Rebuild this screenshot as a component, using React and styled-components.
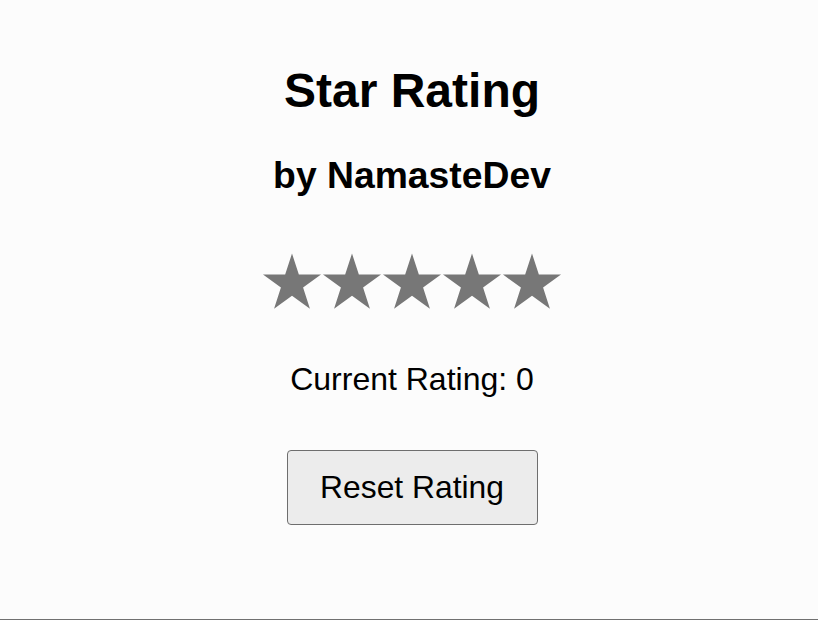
import React, { useState } from "react";
import styled, { createGlobalStyle } from "styled-components";

const GlobalStyle = createGlobalStyle`
  html, body {
    margin: 0;
    padding: 0;
    background: #fcfcfc;
  }
  body {
    font-family: "Liberation Sans", Arial, Helvetica, sans-serif;
    color: #000;
  }
`;

const Page = styled.div`
  box-sizing: border-box;
  min-height: 620px;
  padding: 67px 0 0 6px;
  display: flex;
  flex-direction: column;
  align-items: center;
  border-bottom: 1px solid #707070;
`;

const Title = styled.h1`
  margin: 0;
  font-size: 48px;
  line-height: 1;
  font-weight: 700;
`;

const Subtitle = styled.h2`
  margin: 42px 0 0;
  font-size: 37.3px;
  line-height: 1;
  font-weight: 700;
`;

const Stars = styled.div`
  margin-top: 59px;
  display: flex;
`;

const StarButton = styled.span`
  display: block;
  width: 60px;
  height: 60px;
  cursor: pointer;
  svg {
    display: block;
  }
`;

const Current = styled.p`
  margin: 50px 0 0;
  font-size: 32px;
  line-height: 1;
`;

const Reset = styled.button`
  margin-top: 55px;
  box-sizing: border-box;
  width: 251px;
  height: 75px;
  padding: 0;
  font-family: "Liberation Sans", Arial, Helvetica, sans-serif;
  font-size: 31.8px;
  color: #000;
  background: #ececec;
  border: 1px solid #6e6e6e;
  border-radius: 4px;
  cursor: pointer;
`;

const STAR_POINTS =
  "30,0.5 36.85,21.57 59.01,21.58 41.08,34.6 47.93,55.67 30,42.65 12.07,55.67 18.92,34.6 0.99,21.58 23.15,21.57";

function Star({ filled, onClick }) {
  return (
    <StarButton onClick={onClick}>
      <svg width="60" height="60" viewBox="0 0 60 60">
        <polygon points={STAR_POINTS} fill={filled ? "#f5b301" : "#777777"} />
      </svg>
    </StarButton>
  );
}

export default function App() {
  const [rating, setRating] = useState(0);

  return (
    <>
      <GlobalStyle />
      <Page>
        <Title>Star Rating</Title>
        <Subtitle>by NamasteDev</Subtitle>
        <Stars>
          {[1, 2, 3, 4, 5].map((n) => (
            <Star key={n} filled={n <= rating} onClick={() => setRating(n)} />
          ))}
        </Stars>
        <Current>Current Rating: {rating}</Current>
        <Reset onClick={() => setRating(0)}>Reset Rating</Reset>
      </Page>
    </>
  );
}
